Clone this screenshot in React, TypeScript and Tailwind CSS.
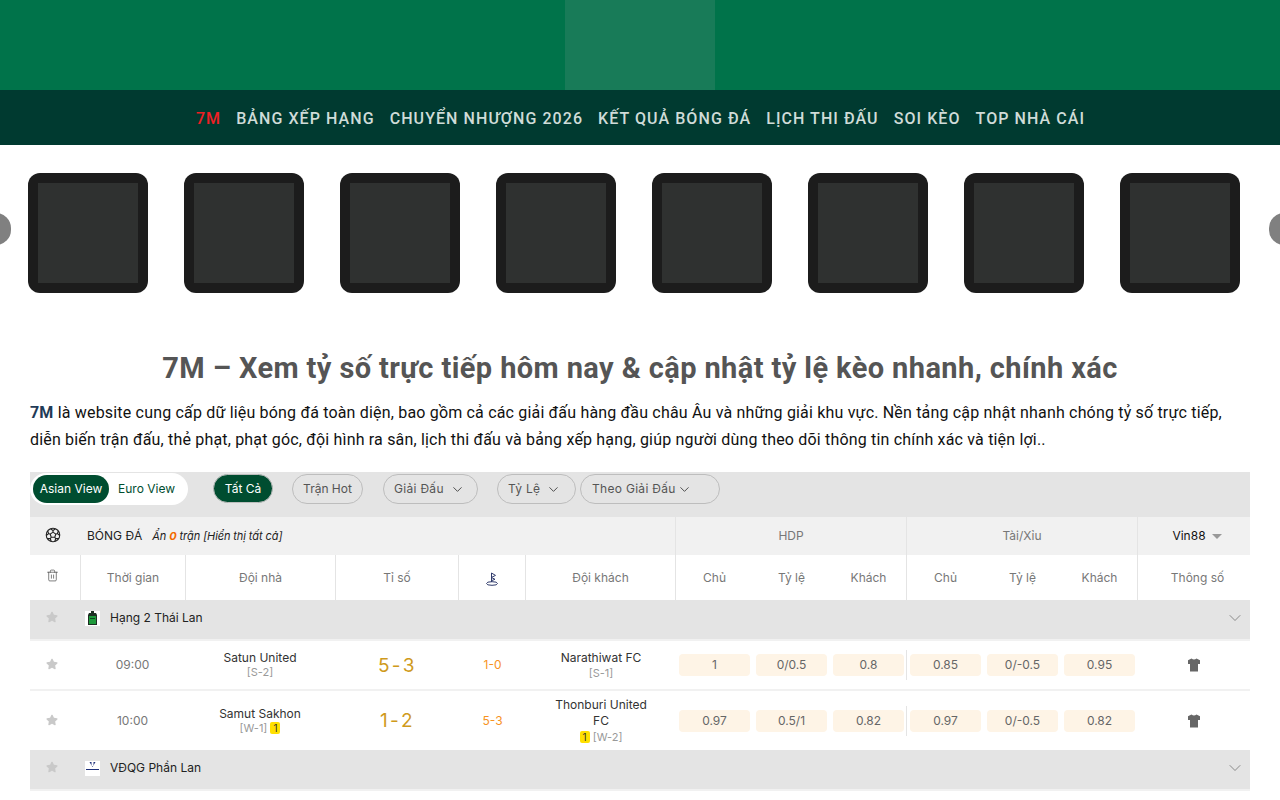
import { ChevronDown, Trash2 } from "lucide-react";
import { FaStar } from "react-icons/fa";
import { PiSoccerBall } from "react-icons/pi";

const navItems = [
  "BẢNG XẾP HẠNG",
  "CHUYỂN NHƯỢNG 2026",
  "KẾT QUẢ BÓNG ĐÁ",
  "LỊCH THI ĐẤU",
  "SOI KÈO",
  "TOP NHÀ CÁI",
];

const slides = [0, 1, 2, 3, 4, 5, 6, 7];

const GRID =
  "grid grid-cols-[50px_105px_150px_123px_67px_150px_231px_231px_113px]";

const FlagIcon = () => (
  <svg width="16" height="16" viewBox="0 0 16 16" fill="none" stroke="#2f3a6b" strokeWidth="1">
    <path d="M7.5 2v9" />
    <path d="M7.5 2l4 2.4-4 2" />
    <path d="M7.5 6.5l3.5 1.8-3.5 1.4" />
    <ellipse cx="8" cy="12.5" rx="5.5" ry="1.8" />
  </svg>
);

const ShirtIcon = () => (
  <svg width="12" height="14" viewBox="0 0 12 14" fill="#666">
    <path d="M3.5 0.5L0 2.2V6h2v7.5h8V6h2V2.2L8.5 0.5Q6 2.4 3.5 0.5z" />
  </svg>
);

const ThaiLeagueIcon = () => (
  <div className="flex h-[15px] w-[15px] items-center justify-center bg-white">
    <svg width="11" height="15" viewBox="0 0 11 15">
      <path d="M4 0h3v2h2l1 2v10H1V4l1-2h2z" fill="#1f2f24" />
      <rect x="2" y="5" width="7" height="8" fill="#1f9a3c" />
      <rect x="3" y="7" width="5" height="1" fill="#0b4a1e" />
    </svg>
  </div>
);

const FinlandIcon = () => (
  <div className="flex h-[15px] w-[15px] flex-col items-center bg-white">
    <svg width="15" height="15" viewBox="0 0 15 15">
      <path d="M4.5 1h6l-3 5z" fill="#1d2f7a" />
      <rect x="6.5" y="1" width="2" height="4" fill="#ffffff" />
      <rect x="1" y="8" width="13" height="1" fill="#1d2f7a" />
    </svg>
  </div>
);

const Filter = ({ label, className }: { label: string; className: string }) => (
  <div
    className={
      "flex h-[30px] items-center rounded-full border border-[#bdbdbd] text-[12px] tracking-[0.3px] text-[#555] " +
      className
    }
  >
    {label}
    <ChevronDown size={15} strokeWidth={1.5} className="text-[#444]" />
  </div>
);

const Odd = ({ value }: { value: string }) => (
  <div className="flex h-[22px] w-[71px] items-center justify-center rounded bg-[#fef4e6] text-[12px] text-[#666]">
    {value}
  </div>
);

const Badge = () => (
  <span className="inline-block h-[12px] w-[10px] rounded-[2px] bg-[#ffe000] text-center text-[10px] leading-[12px] text-[#333]">
    1
  </span>
);

const OddsHeader = () => (
  <div className="flex items-center gap-[6px] border-l border-[#e4e4e4] pl-[3px]">
    <span className="w-[71px] text-center">Chủ</span>
    <span className="w-[71px] text-center">Tỷ lệ</span>
    <span className="w-[71px] text-center">Khách</span>
  </div>
);

const LeagueRow = ({ name, icon }: { name: string; icon: React.ReactNode }) => (
  <div className="flex h-[41px] items-start border-b-2 border-[#f1f1f1] bg-[#e4e4e4]">
    <div className="flex h-[33px] w-[43px] shrink-0 items-center justify-center">
      <FaStar size={12} className="ml-[1px] mt-[1px] text-[#c9c9c9]" />
    </div>
    <div className="flex h-[36px] flex-1 items-center pl-[12px]">
      {icon}
      <span className="ml-[10px] text-[12px] text-[#222]">{name}</span>
    </div>
    <ChevronDown size={20} strokeWidth={1} className="mr-[5px] mt-[8px] text-[#777]" />
  </div>
);

type Match = {
  height: string;
  time: string;
  home: React.ReactNode;
  away: React.ReactNode;
  score: string;
  half: string;
  odds: string[];
};

const MatchRow = ({ height, time, home, away, score, half, odds }: Match) => (
  <div className={GRID + " items-center bg-white " + height}>
    <div className="flex justify-center pb-[2px] pr-[7px]">
      <FaStar size={12} className="text-[#c9c9c9]" />
    </div>
    <div className="text-center text-[12px] text-[#777]">{time}</div>
    <div className="text-center text-[12px] leading-[15px] text-[#333]">{home}</div>
    <div className="pt-[2px] text-center text-[19px] tracking-[0.5px] text-[#cf9a1c] [word-spacing:-4px]">
      {score}
    </div>
    <div className="pl-[2px] text-center text-[12px] text-[#f7931e]">{half}</div>
    <div className="pl-[26px] pr-[24px] text-center text-[12px] leading-4 text-[#333]">{away}</div>
    <div className="flex gap-[6px] pl-[4px]">
      {odds.slice(0, 3).map((o, i) => (
        <Odd key={i} value={o} />
      ))}
    </div>
    <div className="flex h-[30px] items-center gap-[6px] border-l border-[#e4e4e4] pl-[3px]">
      {odds.slice(3).map((o, i) => (
        <Odd key={i} value={o} />
      ))}
    </div>
    <div className="flex justify-center">
      <ShirtIcon />
    </div>
  </div>
);

export default function App() {
  return (
    <div className="h-[800px] overflow-hidden bg-white font-['Inter',sans-serif]">
      <div className="flex h-[90px] justify-center bg-[#00734a]">
        <div className="h-full w-[150px] bg-[#187b58]" />
      </div>

      <nav className="flex h-[55px] items-center justify-center gap-[15px] bg-[#003a30] pl-[1px] pt-[2px] font-['Roboto',sans-serif] text-[16px] font-medium tracking-[1.07px] text-[#cfdcd8]">
        <a className="text-[#ed2024]">7M</a>
        {navItems.map((n) => (
          <a key={n}>{n}</a>
        ))}
      </nav>

      <div className="relative flex h-[148px] gap-[36px] overflow-hidden px-[28px] pt-[28px]">
        <div className="absolute left-[-19px] top-[68px] h-[32px] w-[30px] rounded-full bg-[#808080]" />
        {slides.map((s) => (
          <div
            key={s}
            className="flex h-[120px] w-[120px] shrink-0 items-center justify-center rounded-xl bg-[#1c1c1c]"
          >
            <div className="h-[100px] w-[100px] bg-[#2f3130]" />
          </div>
        ))}
        <div className="absolute right-[-19px] top-[68px] h-[32px] w-[30px] rounded-full bg-[#808080]" />
      </div>

      <div className="px-[30px]">
        <h1 className="mt-[57px] text-center font-['Roboto',sans-serif] text-[29px] font-bold leading-[37px] tracking-[0.4px] text-[#555]">
          7M – Xem tỷ số trực tiếp hôm nay &amp; cập nhật tỷ lệ kèo nhanh, chính xác
        </h1>
        <p className="mt-[12px] font-['Roboto',sans-serif] text-[16px] leading-[27px] tracking-[0.18px] text-[#111]">
          <strong className="font-bold text-[#1f3b57]">7M</strong> là website cung cấp dữ liệu bóng
          đá toàn diện, bao gồm cả các giải đấu hàng đầu châu Âu và những giải khu vực. Nền tảng cập
          nhật nhanh chóng tỷ số trực tiếp, diễn biến trận đấu, thẻ phạt, phạt góc, đội hình ra sân,
          lịch thi đấu và bảng xếp hạng, giúp người dùng theo dõi thông tin chính xác và tiện lợi..
        </p>

        <div className="mt-[19px] flex h-[45px] items-start bg-[#e4e4e4] pt-[1px]">
          <div className="flex h-[32px] w-[158px] items-center rounded-full bg-white pl-[3px] text-[12px]">
            <span className="flex h-[28px] w-[76px] items-center justify-center rounded-full bg-[#004d30] text-white">
              Asian View
            </span>
            <span className="ml-[9px] text-[#004d30]">Euro View</span>
          </div>
          <span className="ml-[25px] mt-[1px] flex h-[29px] w-[60px] items-center justify-center rounded-full border border-[#bdbdbd] bg-[#004d30] text-[12px] text-white">
            Tất Cả
          </span>
          <span className="ml-[19px] mt-[1px] flex h-[30px] w-[71px] items-center justify-center rounded-full border border-[#bdbdbd] text-[12px] text-[#555]">
            Trận Hot
          </span>
          <div className="ml-[20px] mt-[1px]">
            <Filter label="Giải Đấu" className="w-[95px] gap-[6px] pl-[10px]" />
          </div>
          <div className="ml-[19px] mt-[1px]">
            <Filter label="Tỷ Lệ" className="w-[79px] gap-[6px] pl-[10px]" />
          </div>
          <div className="ml-[4px] mt-[1px]">
            <Filter label="Theo Giải Đấu" className="w-[140px] gap-[1px] pl-[11px]" />
          </div>
        </div>

        <div className="flex h-[38px] bg-[#f1f1f1] text-[12px]">
          <div className="flex w-[645px] items-center">
            <div className="flex w-[45px] justify-center pb-[3px]">
              <PiSoccerBall size={18} className="text-[#222]" />
            </div>
            <span className="ml-[12px] text-[#222]">BÓNG ĐÁ</span>
            <span className="ml-[10px] text-[11px] italic tracking-[-0.1px] text-[#222]">
              Ẩn <b className="text-[#f26a00]">0</b> trận [Hiển thị tất cả]
            </span>
          </div>
          <div className="flex w-[231px] items-center justify-center border-l border-[#e4e4e4] text-[#777]">
            HDP
          </div>
          <div className="flex w-[231px] items-center justify-center border-l border-[#e4e4e4] text-[#777]">
            Tài/Xỉu
          </div>
          <div className="flex w-[113px] items-center justify-center gap-[6px] border-l border-[#e4e4e4] pl-[6px] text-[#111]">
            Vin88
            <span className="h-0 w-0 border-x-[5px] border-t-[5px] border-x-transparent border-t-[#999]" />
          </div>
        </div>

        <div className={GRID + " h-[45px] bg-white text-[12px] text-[#777]"}>
          <div className="flex justify-center pr-[6px] pt-[14px]">
            <Trash2 size={13} strokeWidth={1.25} className="text-[#444]" />
          </div>
          <div className="flex items-center justify-center border-l border-[#e4e4e4]">Thời gian</div>
          <div className="flex items-center justify-center border-l border-[#e4e4e4]">Đội nhà</div>
          <div className="flex items-center justify-center border-l border-[#e4e4e4]">Tỉ số</div>
          <div className="flex items-center justify-center border-l border-[#e4e4e4] pt-[2px]">
            <FlagIcon />
          </div>
          <div className="flex items-center justify-center border-l border-[#e4e4e4]">Đội khách</div>
          <OddsHeader />
          <OddsHeader />
          <div className="flex items-center justify-center border-l border-[#e4e4e4] pl-[7px]">
            Thông số
          </div>
        </div>

        <LeagueRow name="Hạng 2 Thái Lan" icon={<ThaiLeagueIcon />} />
        <MatchRow
          height="h-[50px] border-b-2 border-[#f1f1f1]"
          time="09:00"
          home={
            <>
              Satun United
              <div className="text-[11px] text-[#999]">[S-2]</div>
            </>
          }
          away={
            <>
              Narathiwat FC
              <div className="text-[11px] leading-[14px] text-[#999]">[S-1]</div>
            </>
          }
          score="5 - 3"
          half="1-0"
          odds={["1", "0/0.5", "0.8", "0.85", "0/-0.5", "0.95"]}
        />
        <MatchRow
          height="h-[59px]"
          time="10:00"
          home={
            <>
              Samut Sakhon
              <div className="text-[11px] text-[#999]">
                [W-1] <Badge />
              </div>
            </>
          }
          away={
            <>
              Thonburi United FC
              <div className="text-[11px] text-[#999]">
                <Badge /> [W-2]
              </div>
            </>
          }
          score="1 - 2"
          half="5-3"
          odds={["0.97", "0.5/1", "0.82", "0.97", "0/-0.5", "0.82"]}
        />
        <LeagueRow name="VĐQG Phần Lan" icon={<FinlandIcon />} />
      </div>
    </div>
  );
}
